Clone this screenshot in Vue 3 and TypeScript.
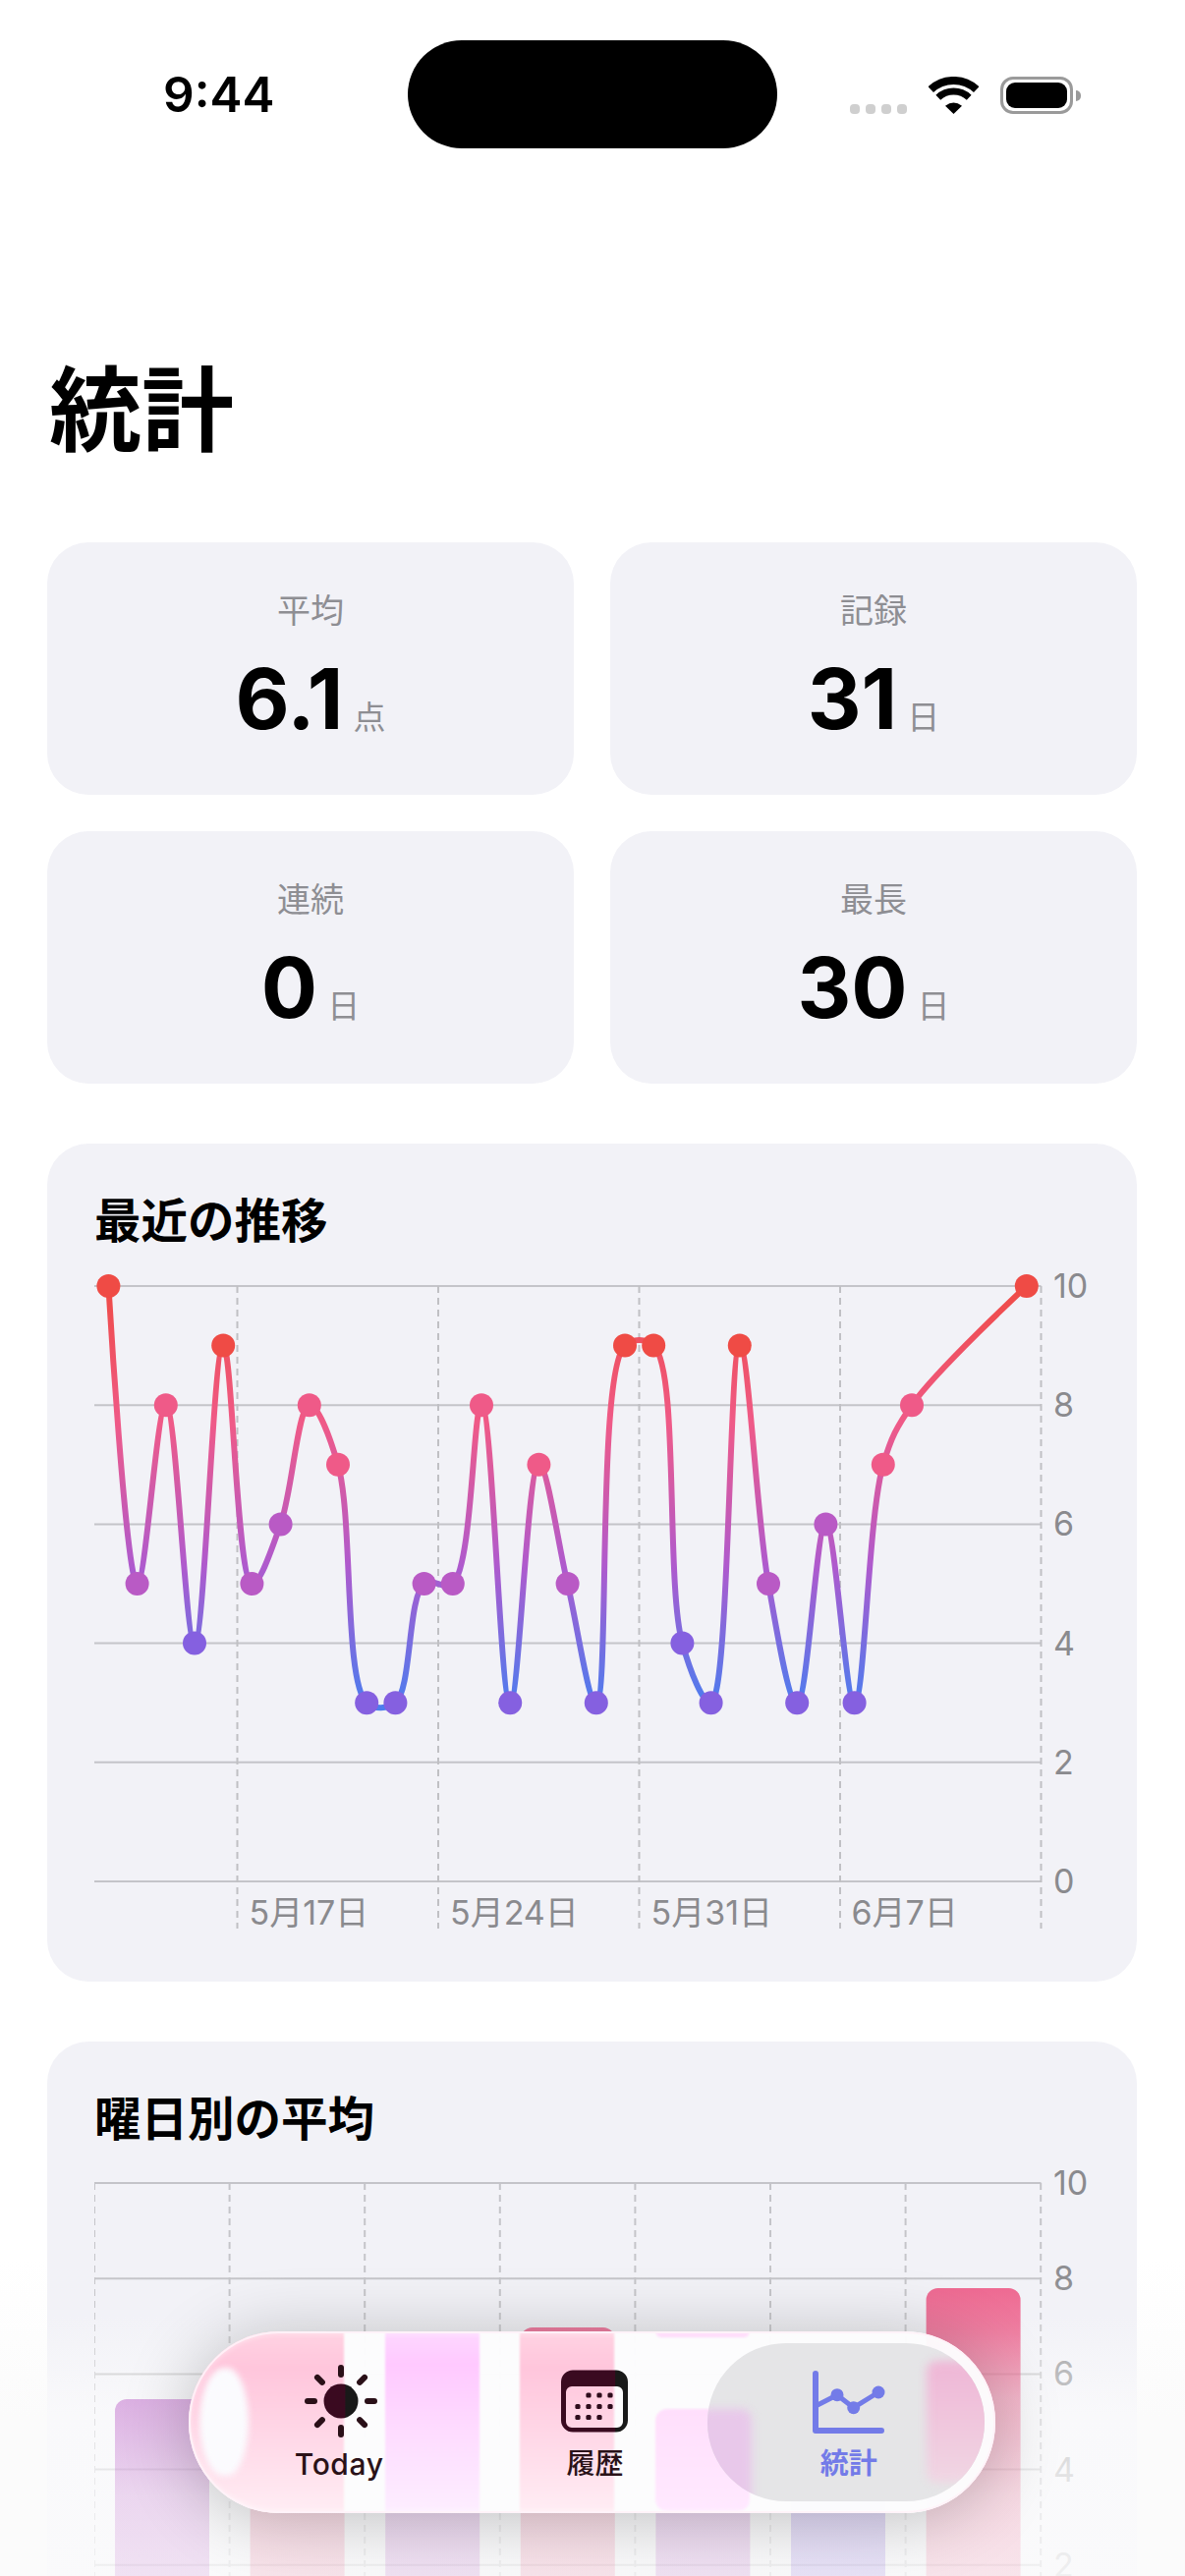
<script setup lang="ts">
interface Stat {
  label: string
  value: string
  unit: string
}

const stats: Stat[] = [
  { label: '平均', value: '6.1', unit: '点' },
  { label: '記録', value: '31', unit: '日' },
  { label: '連続', value: '0', unit: '日' },
  { label: '最長', value: '30', unit: '日' },
]

const levels = [10, 8, 6, 4, 2, 0]

// trend chart scale
const trendX = (day: number) => 110.4 + day * 29.2
const trendY = (v: number) => 1915 - v * 60.6
const trendDays = [
  10, 5, 8, 4, 9, 5, 6, 8, 7, 3, 3, 5, 5, 8, 3, 7, 5, 3, 9, 9, 4, 3, 9, 5, 3, 6, 3, 7, 8,
]
const pointColor = (v: number) => {
  if (v >= 9) return '#ef4b45'
  if (v >= 7) return '#ef5a88'
  if (v >= 5) return '#b95ac5'
  return '#8560e0'
}
const trendPoints = [
  ...trendDays.map((v, i) => ({ x: trendX(i), y: trendY(v), color: pointColor(v) })),
  { x: trendX(32), y: trendY(10), color: pointColor(10) },
]

// centripetal catmull-rom, keeps the short flat runs from overshooting
const chord = (a: { x: number; y: number }, b: { x: number; y: number }) =>
  Math.sqrt(Math.hypot(a.x - b.x, a.y - b.y))

const trendPath = trendPoints.reduce((d, p2, i, all) => {
  if (i === 0) return `M${p2.x} ${p2.y}`
  const p1 = all[i - 1]
  const p0 = all[Math.max(i - 2, 0)]
  const p3 = all[Math.min(i + 1, all.length - 1)]
  const l01 = i > 1 ? chord(p0, p1) : 0
  const l12 = chord(p1, p2)
  const l23 = i < all.length - 1 ? chord(p2, p3) : 0

  let c1 = { x: p1.x, y: p1.y }
  let c2 = { x: p2.x, y: p2.y }
  if (l01 > 0) {
    const a = 2 * l01 * l01 + 3 * l01 * l12 + l12 * l12
    const n = 3 * l01 * (l01 + l12)
    c1 = {
      x: (p1.x * a - p0.x * l12 * l12 + p2.x * l01 * l01) / n,
      y: (p1.y * a - p0.y * l12 * l12 + p2.y * l01 * l01) / n,
    }
  }
  if (l23 > 0) {
    const b = 2 * l23 * l23 + 3 * l23 * l12 + l12 * l12
    const m = 3 * l23 * (l23 + l12)
    c2 = {
      x: (p2.x * b + p1.x * l23 * l23 - p3.x * l12 * l12) / m,
      y: (p2.y * b + p1.y * l23 * l23 - p3.y * l12 * l12) / m,
    }
  }
  return `${d} C${c1.x} ${c1.y} ${c2.x} ${c2.y} ${p2.x} ${p2.y}`
}, '')

const weekTicks = [241.5, 446, 650.5, 855, 1059.5]
const weekLabels = [
  { x: 253.5, text: '5月17日' },
  { x: 458, text: '5月24日' },
  { x: 662.5, text: '5月31日' },
  { x: 866.5, text: '6月7日' },
]

// weekday chart scale
const weekY = (v: number) => 2708 - v * 48.6
const dayLines = Array.from({ length: 8 }, (_, i) => 96 + i * 137.6)
const bars = [
  { top: 2442, fill: 'bar-purple' },
  { top: 2380, fill: 'bar-pink' },
  { top: 2385, fill: 'bar-purple' },
  { top: 2369, fill: 'bar-pink' },
  { top: 2451, fill: 'bar-purple' },
  { top: 2500, fill: 'bar-violet' },
  { top: 2329, fill: 'bar-pink' },
].map((b, i) => ({ ...b, x: 117 + i * 137.6 }))

const barFades = [
  { id: 'bar-pink', color: '#ee6a92' },
  { id: 'bar-purple', color: '#b95ac5' },
  { id: 'bar-violet', color: '#8560e0' },
]
const barStops = [
  { y: 0, a: 1 },
  { y: 0.14, a: 0.86 },
  { y: 0.38, a: 0.46 },
  { y: 0.72, a: 0.22 },
  { y: 1, a: 0.15 },
]

const sunRays = [0, 45, 90, 135, 180, 225, 270, 315]
const calendarDots = [
  [34, 34], [45, 34], [56, 34],
  [23, 45.5], [34, 45.5], [45, 45.5], [56, 45.5],
  [23, 56.5], [34, 56.5], [45, 56.5],
]
</script>

<template>
  <div class="page">
    <div class="status">
      <span class="time">9:44</span>
      <div class="island" />
      <div class="status-right">
        <div class="signal"><i /><i /><i /><i /></div>
        <svg class="wifi" width="51" height="38" viewBox="0 0 51 38">
          <path d="M2.3 13.1A34 34 0 0 1 48.7 13.1" fill="none" stroke="#000" stroke-width="8" />
          <path d="M9.8 21.2A23 23 0 0 1 41.2 21.2" fill="none" stroke="#000" stroke-width="7" />
          <path d="M25.5 38L17 29.7Q25.5 23.5 34 29.7Z" fill="#000" />
        </svg>
        <div class="battery"><div class="battery-fill" /></div>
        <div class="battery-nub" />
      </div>
    </div>

    <h1 class="title">統計</h1>

    <div class="stats">
      <div v-for="s in stats" :key="s.label" class="stat">
        <div class="stat-label">{{ s.label }}</div>
        <div class="stat-value">
          <span class="num">{{ s.value }}</span>
          <span class="unit">{{ s.unit }}</span>
        </div>
      </div>
    </div>

    <section class="card">
      <h2 class="card-title">最近の推移</h2>
      <svg class="trend" width="1061" height="700" viewBox="96 1290 1061 700">
        <defs>
          <linearGradient id="trend-line" gradientUnits="userSpaceOnUse" x1="0" x2="0" :y1="trendY(10)" :y2="trendY(3)">
            <stop offset="0" stop-color="#ef4b45" />
            <stop offset="0.33" stop-color="#ef5a88" />
            <stop offset="0.67" stop-color="#af5acd" />
            <stop offset="1" stop-color="#4d7cee" />
          </linearGradient>
        </defs>
        <line v-for="v in levels" :key="v" class="grid" x1="96" x2="1059.5" :y1="trendY(v)" :y2="trendY(v)" />
        <line v-for="x in weekTicks" :key="x" class="tick" :x1="x" :x2="x" y1="1309" y2="1963" />
        <text v-for="v in levels" :key="v" class="axis" x="1072" :y="trendY(v) + 12">{{ v }}</text>
        <text v-for="w in weekLabels" :key="w.x" class="axis" :x="w.x" y="1959">{{ w.text }}</text>
        <path :d="trendPath" fill="none" stroke="url(#trend-line)" stroke-width="6" />
        <circle v-for="p in trendPoints" :key="p.x" :cx="p.x" :cy="p.y" r="12" :fill="p.color" />
      </svg>
    </section>

    <section class="card weekly">
      <h2 class="card-title">曜日別の平均</h2>
      <svg class="trend" width="1061" height="520" viewBox="96 2204 1061 520">
        <defs>
          <linearGradient id="grid-fade" gradientUnits="userSpaceOnUse" x1="0" x2="0" y1="2222" y2="2622">
            <stop offset="0" stop-color="#c4c4c9" />
            <stop offset="0.3" stop-color="#c6c6ca" />
            <stop offset="0.49" stop-color="#dadadc" />
            <stop offset="0.74" stop-color="#e8e8ea" />
            <stop offset="1" stop-color="#efeff0" />
          </linearGradient>
          <linearGradient id="text-fade" gradientUnits="userSpaceOnUse" x1="0" x2="0" y1="2222" y2="2622">
            <stop offset="0" stop-color="#8a8a8e" />
            <stop offset="0.25" stop-color="#8e8e92" />
            <stop offset="0.49" stop-color="#bcbcbe" />
            <stop offset="0.74" stop-color="#e2e2e3" />
            <stop offset="1" stop-color="#efeff0" />
          </linearGradient>
          <linearGradient
            v-for="f in barFades"
            :id="f.id"
            :key="f.id"
            gradientUnits="userSpaceOnUse"
            x1="0"
            x2="0"
            y1="2329"
            y2="2622"
          >
            <stop v-for="s in barStops" :key="s.y" :offset="s.y" :stop-color="f.color" :stop-opacity="s.a" />
          </linearGradient>
        </defs>
        <line v-for="v in [10, 8, 6, 4, 2]" :key="v" class="grid faded" x1="96" x2="1059.5" :y1="weekY(v)" :y2="weekY(v)" />
        <line v-for="x in dayLines" :key="x" class="tick faded" :x1="x" :x2="x" y1="2222" y2="2720" />
        <text v-for="v in [10, 8, 6, 4, 2]" :key="v" class="axis axis-fade" x="1072" :y="weekY(v) + 12">{{ v }}</text>
        <rect
          v-for="b in bars"
          :key="b.x"
          :x="b.x"
          :y="b.top"
          width="96"
          :height="2730 - b.top"
          rx="12"
          :fill="`url(#${b.fill})`"
        />
      </svg>
    </section>

    <nav class="tabbar">
      <div class="band band-pink band-first" />
      <div class="island-light" />
      <div class="band band-lilac" />
      <div class="band band-pink band-third" />
      <div class="band band-lilac-low" />
      <div class="band band-sliver" />
      <div class="selected">
        <div class="selected-lilac" />
        <div class="selected-pink" />
      </div>
      <div class="tab">
        <svg width="80" height="80" viewBox="0 0 80 80">
          <defs>
            <linearGradient id="sun-tint" gradientUnits="userSpaceOnUse" x1="0" x2="80" y1="0" y2="0">
              <stop offset="0.55" stop-color="#3a0a20" />
              <stop offset="0.56" stop-color="#191919" />
            </linearGradient>
          </defs>
          <circle cx="40" cy="40" r="17.5" fill="url(#sun-tint)" />
          <rect
            v-for="a in sunRays"
            :key="a"
            x="37"
            y="3"
            width="6"
            height="13"
            rx="3"
            fill="#2a1018"
            :transform="`rotate(${a} 40 40)`"
          />
        </svg>
        <span class="tab-label tab-latin">Today</span>
      </div>
      <div class="tab">
        <svg width="80" height="80" viewBox="0 0 80 80">
          <defs>
            <linearGradient id="cal-tint" gradientUnits="userSpaceOnUse" x1="0" x2="80" y1="0" y2="0">
              <stop offset="0.76" stop-color="#3a0a20" />
              <stop offset="0.77" stop-color="#191919" />
            </linearGradient>
          </defs>
          <path
            fill="url(#cal-tint)"
            fill-rule="evenodd"
            d="M18 8.5H62A12 12 0 0 1 74 20.500V59.500A12 12 0 0 1 62 71.500H18A12 12 0 0 1 6 59.500V20.500A12 12 0 0 1 18 8.500ZM17 25A6 6 0 0 0 11 31V61A6 6 0 0 0 17 67H63A6 6 0 0 0 69 61V31A6 6 0 0 0 63 25Z"
          />
          <rect
            v-for="d in calendarDots"
            :key="d.join()"
            :x="d[0] - 2.6"
            :y="d[1] - 2.6"
            width="5.200"
            height="5.200"
            rx="1.600"
            fill="#2e0c1c"
          />
        </svg>
        <span class="tab-label">履歴</span>
      </div>
      <div class="tab tab-active">
        <svg width="80" height="80" viewBox="0 0 80 80">
          <path d="M6 12V70H73" fill="none" stroke="#737be8" stroke-width="6" stroke-linecap="round" stroke-linejoin="round" />
          <path d="M8 44L28 33.700L44.700 46.700L70 31" fill="none" stroke="#737be8" stroke-width="5" />
          <circle cx="28" cy="33.700" r="6.500" fill="#737be8" />
          <circle cx="44.700" cy="46.700" r="6.500" fill="#737be8" />
          <circle cx="70" cy="31" r="6.500" fill="#737be8" />
        </svg>
        <span class="tab-label">統計</span>
      </div>
    </nav>
  </div>
</template>

<style>
html,
body {
  margin: 0;
  background: #fff;
  overflow: hidden;
}
</style>

<style scoped>
.page {
  position: relative;
  width: 1206px;
  height: 2622px;
  overflow: hidden;
  background: linear-gradient(#fff 0, #fff 2300px, #fbfbfb 2460px, #fbfbfb 100%);
  font-family: Inter, 'Noto Sans CJK JP', sans-serif;
  color: #000;
}

.status {
  display: flex;
  align-items: center;
  height: 110px;
  padding: 41px 106px 0 166px;
}

.time {
  width: 110px;
  font-size: 49.5px;
  font-weight: 600;
  line-height: 110px;
}

.island {
  width: 376px;
  height: 110px;
  margin-left: 139px;
  border-radius: 55px;
  background: #000;
}

.status-right {
  display: flex;
  align-items: center;
  height: 38px;
  margin-left: auto;
  margin-top: 2px;
}

.signal {
  display: flex;
  gap: 6px;
  align-self: flex-end;
}

.signal i {
  width: 10px;
  height: 10px;
  border-radius: 4px;
  background: #cfcfcf;
}

.wifi {
  margin-left: 22px;
}

.battery {
  box-sizing: border-box;
  width: 74px;
  height: 38px;
  margin-left: 22px;
  padding: 3px;
  border: 3px solid #9a9a9a;
  border-radius: 13px;
}

.battery-fill {
  width: 100%;
  height: 100%;
  border-radius: 9px;
  background: #000;
}

.battery-nub {
  width: 5px;
  height: 11px;
  margin-left: 3px;
  border-radius: 0 5px 5px 0;
  background: #9a9a9a;
}

.title {
  margin: 212px 0 0 50px;
  font-size: 94px;
  font-weight: 700;
  line-height: 110px;
}

.stats {
  display: grid;
  grid-template-columns: 1fr 1fr;
  gap: 37px;
  margin: 79px 49px 0 48px;
}

.stat {
  box-sizing: border-box;
  height: 257px;
  padding-top: 48px;
  border-radius: 42px;
  background: #f2f2f7;
  text-align: center;
}

.stat-label {
  font-size: 34px;
  line-height: 44px;
  color: #8e8e93;
}

.stat-value {
  display: flex;
  justify-content: center;
  align-items: baseline;
  gap: 10px;
  margin-top: 18px;
}

.num {
  font-size: 85px;
  font-weight: 700;
  line-height: 100px;
}

.unit {
  font-size: 33px;
  color: #8e8e93;
}

.card {
  margin: 61px 49px 0 48px;
  padding: 49px 0 27px 48px;
  border-radius: 42px;
  background: #f2f2f7;
}

.weekly {
  height: 700px;
  background: linear-gradient(#f2f2f7 0, #f2f2f7 280px, #f9f9fb 380px, #fbfbfb 100%);
}

.card-title {
  margin: 0;
  font-size: 47.5px;
  font-weight: 700;
  line-height: 60px;
}

.trend {
  display: block;
  margin-top: 17px;
}

.grid {
  stroke: #c4c4c9;
  stroke-width: 2;
}

.tick {
  stroke: #c0c0c4;
  stroke-width: 2;
  stroke-dasharray: 7 5;
}

.faded {
  stroke: url(#grid-fade);
}

.axis {
  font-size: 34px;
  fill: #8a8a8e;
}

.axis-fade {
  fill: url(#text-fade);
}

.tabbar {
  position: absolute;
  left: 192px;
  top: 2373px;
  display: flex;
  box-sizing: border-box;
  width: 821px;
  height: 185px;
  padding: 0 20px 0 26px;
  overflow: hidden;
  border-radius: 92px;
  background: rgba(252, 252, 253, 0.97);
  box-shadow: 0 6px 70px rgba(0, 0, 0, 0.24);
}

.tabbar::after {
  content: '';
  position: absolute;
  inset: 0;
  z-index: 3;
  border-radius: 92px;
  box-shadow: inset 0 0 0 2px rgba(255, 242, 248, 0.9), inset 0 0 6px 2px rgba(255, 255, 255, 0.5);
  pointer-events: none;
}

.band {
  position: absolute;
  top: 0;
  bottom: 0;
  filter: blur(1px);
}

.band-pink {
  background: linear-gradient(#ffd3e3 0, #ffc6dc 20%, #ffd9e8 60%, #ffedf4 100%);
}

.band-first {
  left: 0;
  width: 158px;
}

.band-third {
  left: 337px;
  width: 96px;
}

.island-light {
  position: absolute;
  left: 11px;
  top: 37px;
  width: 50px;
  height: 110px;
  border-radius: 50% 22px 22px 50% / 50%;
  background: #fbfbfe;
  filter: blur(3px);
  z-index: 1;
}

.band-lilac {
  left: 200px;
  width: 96px;
  background: linear-gradient(#fed8ff 0, #ffc9ff 18%, #fedcff 55%, #fdeeff 100%);
}

.band-lilac-low {
  left: 475px;
  width: 96px;
  top: 79px;
  bottom: 2px;
  border-radius: 12px;
  background: linear-gradient(#ffdffc, #ffe9ff);
}

.band-sliver {
  left: 475px;
  width: 96px;
  bottom: auto;
  height: 6px;
  border-radius: 0 0 10px 10px;
  background: #ffd8fb;
}

.selected {
  position: absolute;
  left: 528px;
  top: 12px;
  width: 282px;
  height: 161px;
  overflow: hidden;
  border-radius: 80px;
  background: #e5e5e7;
}

.selected-lilac {
  position: absolute;
  left: -10px;
  top: 67px;
  width: 55px;
  height: 110px;
  border-radius: 10px;
  background: #e8c8ea;
  filter: blur(4px);
}

.selected-pink {
  position: absolute;
  left: 223px;
  top: 18px;
  width: 70px;
  height: 124px;
  border-radius: 10px 40px 40px 10px;
  background: linear-gradient(#efb6d6, #f0d6e3);
  filter: blur(5px);
}

.tab {
  position: relative;
  z-index: 2;
  display: flex;
  flex: 1;
  flex-direction: column;
  align-items: center;
  padding-top: 31px;
}

.tab svg {
  display: block;
}

.tab-label {
  margin-top: 6px;
  font-size: 29px;
  font-weight: 500;
  line-height: 36px;
  color: #2a1218;
}

.tab-latin {
  margin-right: 4px;
  font-size: 30px;
  letter-spacing: 0.6px;
}

.tab-active .tab-label {
  font-weight: 600;
  color: #737be8;
}
</style>
